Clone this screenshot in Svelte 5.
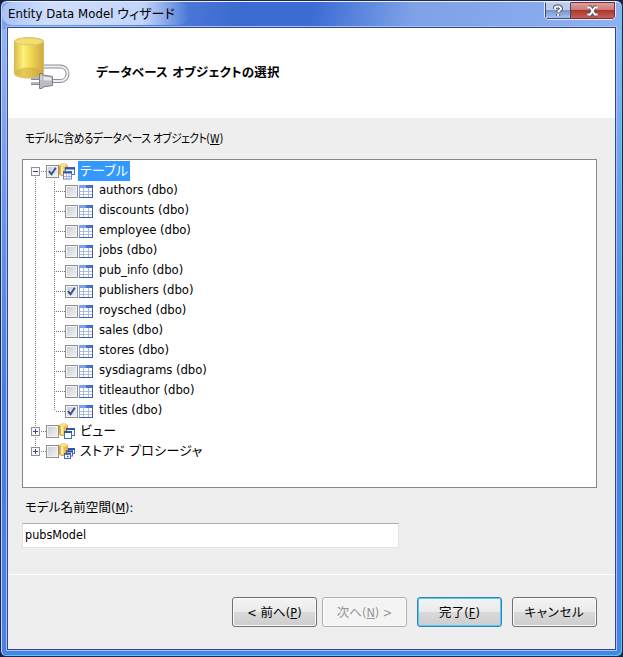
<script lang="ts">
	type Item = { name: string; checked: boolean };

	let tables: Item[] = $state([
		{ name: 'authors (dbo)', checked: false },
		{ name: 'discounts (dbo)', checked: false },
		{ name: 'employee (dbo)', checked: false },
		{ name: 'jobs (dbo)', checked: false },
		{ name: 'pub_info (dbo)', checked: false },
		{ name: 'publishers (dbo)', checked: true },
		{ name: 'roysched (dbo)', checked: false },
		{ name: 'sales (dbo)', checked: false },
		{ name: 'stores (dbo)', checked: false },
		{ name: 'sysdiagrams (dbo)', checked: false },
		{ name: 'titleauthor (dbo)', checked: false },
		{ name: 'titles (dbo)', checked: true }
	]);
	let root: Item = $state({ name: 'テーブル', checked: true });
	let views: Item = $state({ name: 'ビュー', checked: false });
	let procs: Item = $state({ name: 'ストアド プロシージャ', checked: false });
	let namespace = $state('pubsModel');
</script>

{#snippet checkbox(item: Item)}
	<button
		class="check"
		role="checkbox"
		aria-checked={item.checked}
		aria-label={item.name}
		onclick={() => (item.checked = !item.checked)}
	>
		{#if item.checked}
			<svg width="9" height="9" viewBox="0 0 9 9">
				<path d="M1 4.2 3.5 7.2 7.8 .8" fill="none" stroke="#33508f" stroke-width="1.9" />
			</svg>
		{/if}
	</button>
{/snippet}

{#snippet guide(open: boolean, first: boolean, last: boolean)}
	<svg class="guide" width="23" height="20" shape-rendering="crispEdges">
		{#if !first}<path class="dots" d="M12.5 0V6" />{/if}
		{#if !last}<path class="dots" d="M12.5 16V20" />{/if}
		<path class="dots" d="M18 10.5H23" />
		<rect x="8.5" y="6.5" width="8" height="8" fill="#f8f8f8" stroke="#8f9096" />
		<path d="M10 10.5H15" stroke="#31479b" />
		{#if !open}<path d="M12.5 8V13" stroke="#31479b" />{/if}
	</svg>
{/snippet}

{#snippet folderIcon(kind: string)}
	<svg class="folder" width="17" height="17" viewBox="0 0 17 17">
		<path d="M.5 2.5C1 .5 8 .5 8.5 2.5V11C8 13 1 13 .5 11Z" fill="#f0b83c" stroke="#dda338" />
		<path d="M2 3.5H4.5V11.5H2Z" fill="#ffeeb0" />
		<ellipse cx="4.5" cy="2.3" rx="3.6" ry="1.2" fill="#ffe08a" />
		{#if kind === 'table'}
			<rect x="6.5" y="4.5" width="9" height="7" fill="#fff" stroke="#4d70c4" />
			<path d="M6 5.5H16" stroke="#2f55b5" stroke-width="2" />
			<rect x="4.5" y="8.5" width="8" height="7.5" fill="#fff" stroke="#6e87c9" />
			<path d="M4 9.5H13" stroke="#2f55b5" stroke-width="2" />
			<path d="M5 13.5H12M7.5 11V16M10 11V16" stroke="#a3b2de" />
		{:else if kind === 'view'}
			<rect x="7.5" y="5.5" width="8" height="7" fill="#fff" stroke="#4868bc" />
			<path d="M7 6H16" stroke="#3153ab" stroke-width="2" />
			<rect x="5.5" y="8.5" width="7" height="7" fill="#fff" stroke="#4868bc" />
			<path d="M5 9H13" stroke="#3153ab" stroke-width="2" />
		{:else}
			<rect x="9.5" y="5.5" width="6" height="5" fill="#fff" stroke="#4868bc" />
			<path d="M9 6H16" stroke="#3153ab" stroke-width="2" />
			<rect x="7.5" y="8" width="6" height="5" fill="#fff" stroke="#4868bc" />
			<path d="M7 8.5H14" stroke="#3153ab" stroke-width="2" />
			<rect x="5.5" y="10.5" width="6" height="5" fill="#fff" stroke="#4868bc" />
			<path d="M5 11H12M8 13.5H9.5" stroke="#3153ab" stroke-width="1.6" />
		{/if}
	</svg>
{/snippet}

{#snippet tableIcon()}
	<svg width="14" height="13" viewBox="0 0 14 13" shape-rendering="crispEdges">
		<rect width="14" height="13" fill="#8fa9e2" />
		<path d="M0 0H14V3H0Z" fill="#7d9fea" />
		<path d="M7 0H14V3H7Z" fill="#4a70d2" />
		<path d="M13 0H14V13H0V12H13Z" fill="#3c5cb4" />
		<path
			d="M1 3H4V6H1ZM5 3H9V6H5ZM10 3H13V6H10ZM1 7H4V9H1ZM5 7H9V9H5ZM10 7H13V9H10ZM1 10H4V12H1ZM5 10H9V12H5ZM10 10H13V12H10Z"
			fill="#fff"
		/>
		<path d="M4.5 3V12M9.5 3V12M1 6.5H13M1 9.5H13" stroke="#a9bbe4" />
	</svg>
{/snippet}

<div class="window">
	<div class="titlebar">
		<span class="title">Entity Data Model ウィザード</span>
		<div class="controls">
			<button class="help" aria-label="ヘルプ">
				<svg width="12" height="14" viewBox="0 0 12 14">
					<path class="halo" d="M3 5V3.7C3 2 9 2 9 4.5 9 6.5 6.2 6.3 6.2 8.3M6.2 10V12" />
					<path class="mark" d="M3 5V3.7C3 2 9 2 9 4.5 9 6.5 6.2 6.3 6.2 8.3M6.2 10V12" />
				</svg>
			</button>
			<button class="close" aria-label="閉じる">
				<svg width="13" height="12" viewBox="0 0 13 12">
					<path class="halo" d="M2.5 2.5H4.2L8.8 9.5H10.5M10.5 2.5H8.8L4.2 9.5H2.5" />
					<path class="mark" d="M1.5 2.5H4.2L8.8 9.5H11.5M11.5 2.5H8.8L4.2 9.5H1.5" />
				</svg>
			</button>
		</div>
	</div>

	<div class="client">
		<header>
			<svg width="58" height="54" viewBox="0 0 58 54">
				<defs>
					<linearGradient id="gold">
						<stop offset="0" stop-color="#dcbc48" />
						<stop offset=".3" stop-color="#fbf27c" />
						<stop offset=".55" stop-color="#f0d956" />
						<stop offset="1" stop-color="#cfa743" />
					</linearGradient>
				</defs>
				<path d="M30 29.5H46C56 29.5 56 44 46 44H39" fill="none" stroke="#8b8e94" stroke-width="4" />
				<path d="M30 29.5H46C56 29.5 56 44 46 44H39" fill="none" stroke="#eceef1" stroke-width="2" />
				<path d="M.5 4.5C1 -.5 29 -.5 29.5 4.5V36.5C29 42.5 1 42.5 .5 36.5Z" fill="url(#gold)" stroke="#d6ba58" />
				<ellipse cx="15" cy="35.5" rx="13.5" ry="5" fill="#cba638" opacity=".5" />
				<ellipse cx="15" cy="4.5" rx="14" ry="3.4" fill="#f2df72" stroke="#e0c766" />
				<path d="M17 41.5H26M17 46.5H26" stroke="#85888e" stroke-width="3" />
				<path d="M17 41H26M17 46H26" stroke="#e6e8ea" />
				<path d="M25.5 36.5H28.5L29 38 38.5 39.5V48.5L29 50 28 51.5H25.5Z" fill="#babdc3" stroke="#7b7e84" />
				<path d="M27 39V43M30 40L37 41V43H30Z" fill="#e4e6e9" stroke="#e4e6e9" />
			</svg>
			<h1>データベース オブジェクトの選択</h1>
		</header>

		<main>
			<div class="label tree-label">モデルに含めるデータベース オブジェクト<span class="key">(<u>W</u>)</span></div>
			<div class="tree">
				<div class="row">
					{@render guide(true, true, false)}
					{@render checkbox(root)}
					{@render folderIcon('table')}
					<span class="name jp selected">{root.name}</span>
				</div>
				{#each tables as table, i}
					<div class="row">
						<svg class="guide" width="42" height="20" shape-rendering="crispEdges">
							<path class="dots" d="M12.5 0V20" />
							<path class="dots" d={i === tables.length - 1 ? 'M31.5 0V10' : 'M31.5 0V20'} />
							<path class="dots" d="M33 10.5H42" />
						</svg>
						{@render checkbox(table)}
						<span class="table-icon">{@render tableIcon()}</span>
						<span class="name">{table.name}</span>
					</div>
				{/each}
				<div class="row">
					{@render guide(false, false, false)}
					{@render checkbox(views)}
					{@render folderIcon('view')}
					<span class="name jp">{views.name}</span>
				</div>
				<div class="row">
					{@render guide(false, false, true)}
					{@render checkbox(procs)}
					{@render folderIcon('proc')}
					<span class="name jp">{procs.name}</span>
				</div>
			</div>
			<label class="label ns-label" for="ns">モデル名前空間<span class="key">(<u>M</u>):</span></label>
			<input id="ns" type="text" bind:value={namespace} />
		</main>

		<footer>
			<button class="btn back">&lt; 前へ(<u>P</u>)</button>
			<button class="btn next" disabled>次へ(<u>N</u>) &gt;</button>
			<button class="btn finish">完了(<u>F</u>)</button>
			<button class="btn cancel">キャンセル</button>
		</footer>
	</div>
</div>

<style>
	:global(body) {
		background: #17203d;
	}

	.window {
		box-sizing: border-box;
		width: 623px;
		height: 657px;
		display: flex;
		flex-direction: column;
		padding: 1px 6px 6px;
		border: 1px solid #1c2a52;
		border-radius: 7px 7px 6px 6px;
		background:
			linear-gradient(100deg, #7fa3ec 0, #3c6bd0 38%, #3c6cd3 50%, #7ea1e8 66%, #8fb0f0 100%) top /
				100% 28px no-repeat,
			linear-gradient(#9db9f4 0, #6f97ec 30%, #4b7ce0 60%, #4f80e5 100%);
		box-shadow:
			inset 0 1px #e8f1ff,
			inset 1px 0 #b6d4ff,
			inset -1px -1px #3fd5f6;
		font-family: 'DejaVu Sans Condensed', 'DejaVu Sans', 'Noto Sans CJK JP', sans-serif;
		font-stretch: condensed;
		font-size: 12.5px;
		color: #000;
	}

	button {
		padding: 0;
		font: inherit;
		color: inherit;
	}

	.titlebar {
		height: 25px;
		flex: none;
		display: flex;
		justify-content: space-between;
		align-items: flex-start;
	}

	.title {
		margin-left: -5px;
		padding: 1px 14px 0 6px;
		height: 22px;
		line-height: 21px;
		font-size: 13px;
		letter-spacing: 0.05px;
		white-space: nowrap;
		font-feature-settings: 'palt';
		background: linear-gradient(90deg, #a9c3f7, #cfdefc 25%, #c3d5fa 75%, #a9c3f700);
		border-radius: 10px;
	}

	.controls {
		display: flex;
		height: 17px;
		border: 1px solid #e0e9fb;
		border-top: 0;
		border-radius: 0 0 5px 5px;
		overflow: hidden;
	}

	.controls button {
		display: flex;
		align-items: center;
		justify-content: center;
		box-sizing: border-box;
		height: 17px;
		border: 1px solid #3a4a7b;
		border-top-color: #cad8ef;
	}

	.controls .help {
		width: 26px;
		background: linear-gradient(#bdcdec 0 48%, #7795cb 50%, #a5c3ee);
	}

	.controls .close {
		width: 44px;
		border-color: #7b2c32;
		border-left: 0;
		background: linear-gradient(#dfa09c 0, #cc7773 48%, #a93830 50%, #c65f52);
	}

	.halo,
	.mark {
		fill: none;
	}

	.halo {
		stroke: #4b5268;
		stroke-width: 4;
	}

	.mark {
		stroke: #fff;
		stroke-width: 2;
	}

	.client {
		flex: 1;
		display: flex;
		flex-direction: column;
		border: 1px solid #2c4a87;
		outline: 1px solid #a9c3f6;
		background: #eee;
	}

	header {
		height: 90px;
		box-sizing: border-box;
		flex: none;
		display: flex;
		padding: 9px 6px;
		background: #fff;
	}

	h1 {
		margin: 27px 0 0 24px;
		font-size: 12.5px;
		letter-spacing: 0.2px;
		line-height: 18px;
		font-weight: bold;
		font-feature-settings: 'palt';
	}

	main {
		height: 457px;
		box-sizing: border-box;
		padding: 11px 18px 0 14px;
		border-bottom: 1px solid #fff;
		display: flex;
		flex-direction: column;
	}

	.label {
		padding-left: 3px;
		line-height: 20px;
		font-feature-settings: 'palt';
		white-space: nowrap;
	}

	/* long caption, set narrower than the rest */
	.tree-label {
		height: 30px;
		font-size: 12px;
		letter-spacing: -0.6px;
		transform: scaleX(0.895);
		transform-origin: 3px 0;
	}

	.key {
		letter-spacing: 0;
	}

	.tree {
		box-sizing: border-box;
		height: 329px;
		padding-top: 1px;
		border: 1px solid #828790;
		background: #fff;
	}

	.row {
		display: flex;
		align-items: center;
		height: 20px;
	}

	.guide {
		flex: none;
	}

	.dots {
		stroke: #777;
		stroke-dasharray: 1 1;
	}

	.check {
		box-sizing: border-box;
		width: 13px;
		height: 13px;
		flex: none;
		display: flex;
		align-items: center;
		justify-content: center;
		border: 1px solid #8e8f8f;
		box-shadow: inset 0 0 0 1px #f4f4f4;
		background: linear-gradient(135deg, #c8ccd1, #f4f4f4);
	}

	.folder {
		margin: 1px 0 0;
	}

	.table-icon {
		display: flex;
		margin-left: 1px;
	}

	.name {
		margin-left: 4px;
		padding: 0 2px;
		line-height: 18px;
		height: 20px;
		font-size: 13px;
		letter-spacing: -0.05px;
	}

	.jp {
		margin-left: 2px;
		line-height: 19px;
		letter-spacing: 0.25px;
		font-feature-settings: 'palt';
	}

	.selected {
		color: #fff;
		background: #3399ff;
	}

	.ns-label {
		margin-top: 10px;
		height: 25px;
		letter-spacing: 0.1px;
	}

	input {
		box-sizing: border-box;
		width: 377px;
		height: 25px;
		padding: 0 2px 2px;
		border: 1px solid #e2e3ea;
		border-top-color: #abadb3;
		font: inherit;
		background: #fff;
	}

	footer {
		flex: 1;
		display: flex;
		justify-content: flex-end;
		padding: 22px 18px 0;
	}

	.btn {
		box-sizing: border-box;
		width: 85px;
		height: 30px;
		padding-bottom: 2px;
		margin-left: 10px;
		border: 1px solid #707070;
		border-radius: 3px;
		box-shadow: inset 0 0 0 1px #fafafa;
		background: linear-gradient(#f3f3f3 0, #ebebeb 48%, #dadada 50%, #cdcdcd);
		font-feature-settings: 'palt';
	}

	.next {
		margin-left: 5px;
		border-color: #adb2b5;
		background: #f4f4f4;
		color: #969696;
	}

	.finish {
		border-color: #3c7fb1;
		box-shadow: inset 0 0 0 1px #48d0f8;
	}

	.back,
	.finish {
		letter-spacing: 0.1px;
	}

	.cancel {
		letter-spacing: 0.7px;
	}
</style>
